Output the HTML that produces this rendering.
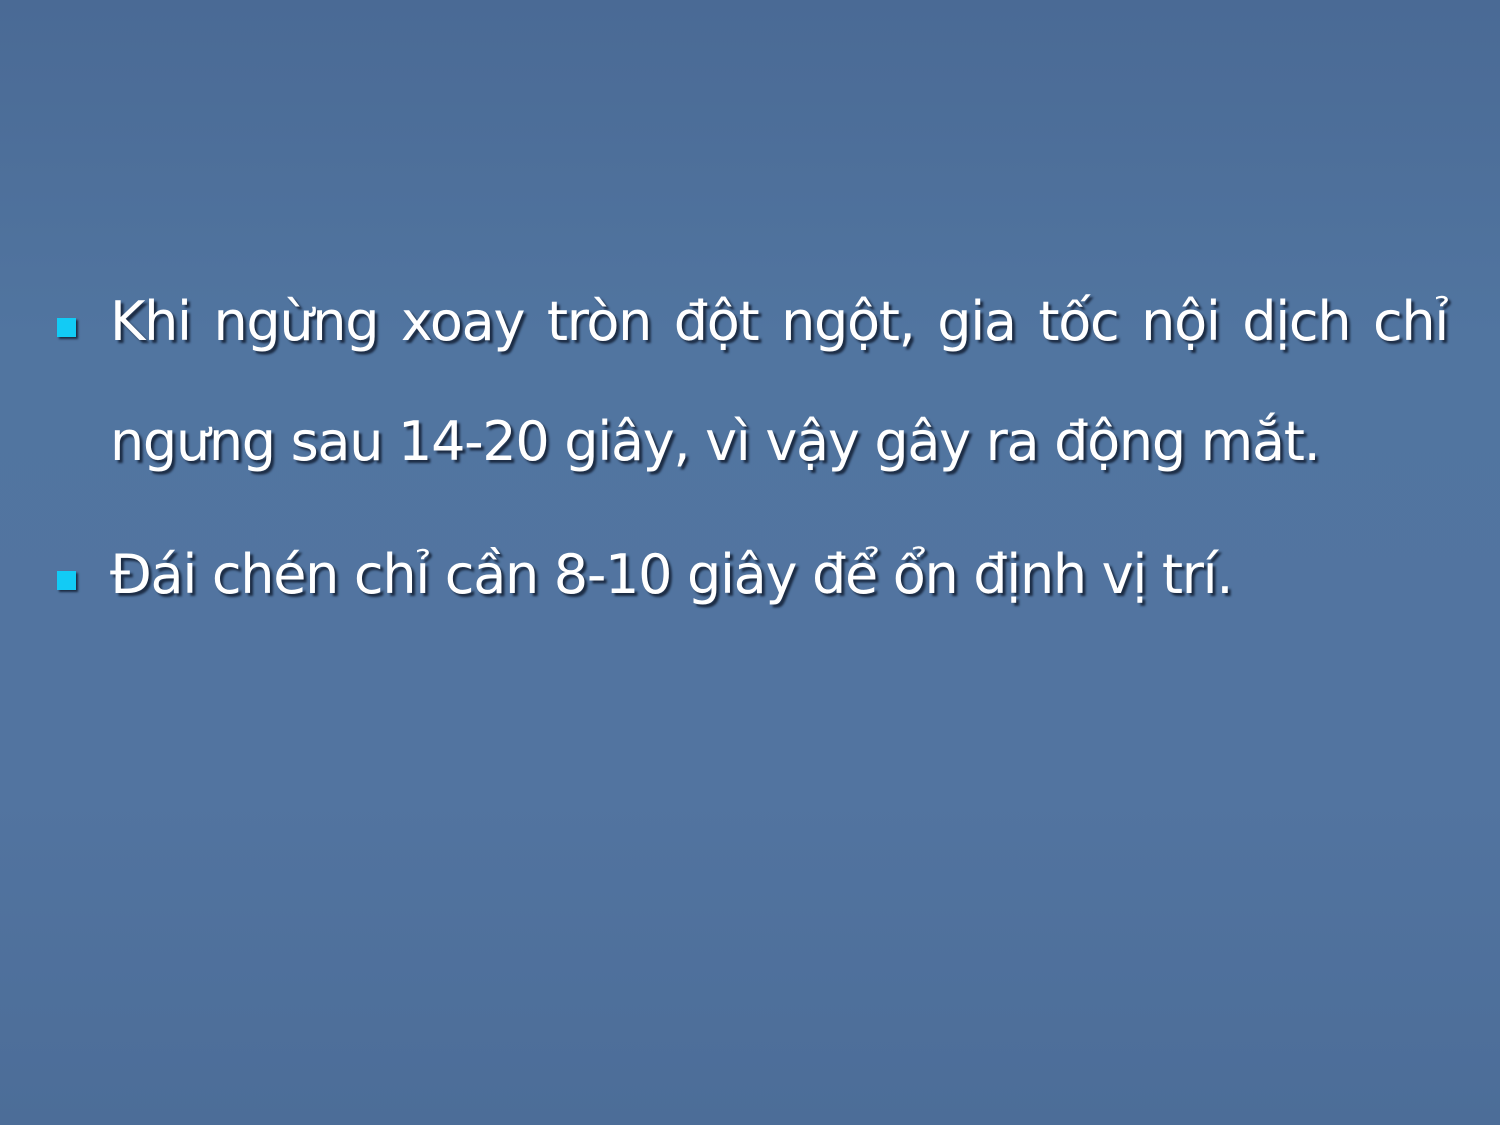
<!DOCTYPE html>
<html><head><meta charset="utf-8"><style>
html,body{margin:0;padding:0}
body{width:1500px;height:1125px;overflow:hidden;position:relative;
background:linear-gradient(180deg,#4a6a95 0%,#5175a0 30%,#5274a0 70%,#4c6d98 100%);
font-family:"DejaVu Sans","Liberation Sans",sans-serif;color:#fff}
.t{position:absolute;left:110px;font-size:54px;white-space:nowrap;text-shadow:3px 3px 2px #1c2c44;letter-spacing:-1.3px}
.b{position:absolute;left:57px;width:19px;height:19px;background:#12cbf5;box-shadow:2px 2px 2px #1c2c44}
</style></head><body>
<div class="b" style="top:318px"></div>
<div class="t" style="top:290px;width:1338px;text-align:justify;text-align-last:justify;white-space:normal;word-spacing:0">Khi ngừng xoay tròn đột ngột, gia tốc nội dịch chỉ</div>
<div class="t" style="top:410px">ngưng sau 14-20 giây, vì vậy gây ra động mắt.</div>
<div class="b" style="top:571px"></div>
<div class="t" style="top:543px">Đái chén chỉ cần 8-10 giây để ổn định vị trí.</div>
</body></html>
